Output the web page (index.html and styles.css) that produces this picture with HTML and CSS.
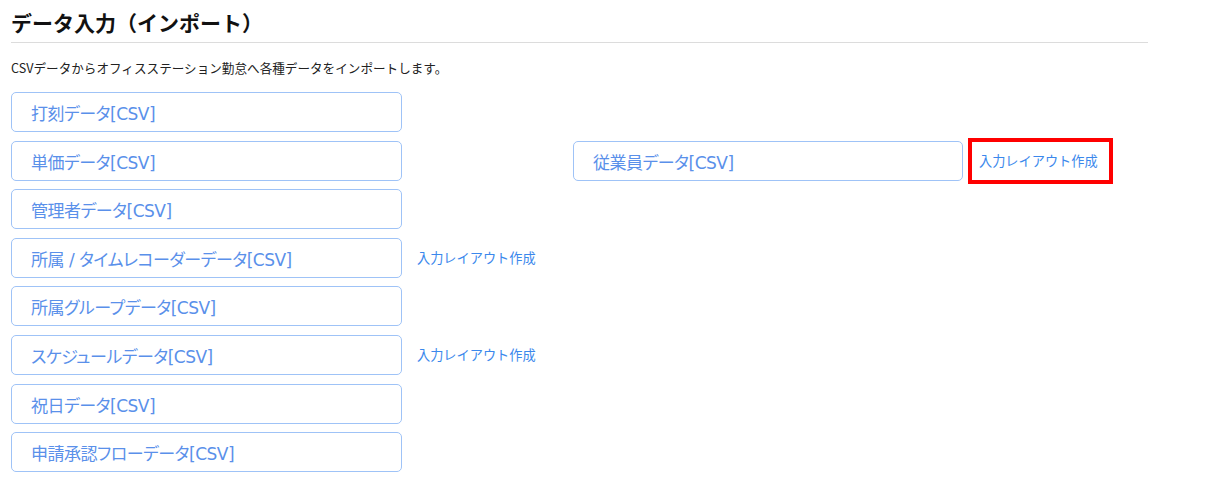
FILE: index.html
```html
<!DOCTYPE html>
<html lang="ja">
<head>
    <meta charset="UTF-8">
    <meta name="viewport" content="width=device-width, initial-scale=1.0">
    <title>データ入力（インポート）</title>
    <link rel="stylesheet" href="styles.css">
</head>
<body>
    <div class="container">
        <h1>データ入力（インポート）</h1>
        <p class="lead">CSVデータからオフィスステーション勤怠へ各種データをインポートします。</p>

        <div class="imports">
            <button class="import-btn">打刻データ[CSV]</button>
            <span></span>
            <span></span>
            <span></span>

            <button class="import-btn">単価データ[CSV]</button>
            <span></span>
            <button class="import-btn">従業員データ[CSV]</button>
            <span class="link-cell"><a href="#" class="layout-link highlight">入力レイアウト作成</a></span>

            <button class="import-btn">管理者データ[CSV]</button>
            <span></span>
            <span></span>
            <span></span>

            <button class="import-btn">所属 / タイムレコーダーデータ[CSV]</button>
            <span class="link-cell"><a href="#" class="layout-link">入力レイアウト作成</a></span>
            <span></span>
            <span></span>

            <button class="import-btn">所属グループデータ[CSV]</button>
            <span></span>
            <span></span>
            <span></span>

            <button class="import-btn">スケジュールデータ[CSV]</button>
            <span class="link-cell"><a href="#" class="layout-link">入力レイアウト作成</a></span>
            <span></span>
            <span></span>

            <button class="import-btn">祝日データ[CSV]</button>
            <span></span>
            <span></span>
            <span></span>

            <button class="import-btn">申請承認フローデータ[CSV]</button>
            <span></span>
            <span></span>
            <span></span>
        </div>
    </div>
</body>
</html>
```

FILE: styles.css
```css
:root {
    --blue: #5a90ea;
    --blue-border: #9fc3f7;
    --link: #3b88ec;
    --text: #111;
    --rule: #dcdcdc;
}

* {
    margin: 0;
    padding: 0;
    box-sizing: border-box;
}

body {
    font-family: "Noto Sans CJK JP", "Noto Sans", sans-serif;
    background: #fff;
    color: var(--text);
}

.container {
    padding: 0 11px;
}

h1 {
    width: 1137px;
    margin-top: 7px;
    padding-bottom: 5px;
    font-size: 21px;
    line-height: 30px;
    font-weight: 700;
    border-bottom: 1px solid var(--rule);
}

.lead {
    margin-top: 16px;
    font-size: 12.6px;
    line-height: 18px;
    color: #222;
}

.imports {
    display: grid;
    grid-template-columns: 391px 171px 390px auto;
    grid-auto-rows: 40px;
    row-gap: 8.6px;
    margin-top: 15px;
}

.import-btn {
    font-family: "DejaVu Sans", "Noto Sans CJK JP", sans-serif;
    font-size: 17px;
    font-feature-settings: "palt";
    letter-spacing: -0.5px;
    color: var(--blue);
    background: #fff;
    border: 1px solid var(--blue-border);
    border-radius: 5px;
    text-align: left;
    padding-left: 19px;
    padding-top: 1px;
    cursor: pointer;
}

.link-cell {
    display: flex;
    align-items: center;
}

.layout-link {
    font-size: 13.2px;
    color: var(--link);
    text-decoration: none;
    margin-left: 15px;
}

.highlight {
    margin-left: 5px;
    width: 145px;
    height: 46px;
    display: flex;
    align-items: center;
    padding-left: 7px;
    border: 4px solid #f00;
}
```
